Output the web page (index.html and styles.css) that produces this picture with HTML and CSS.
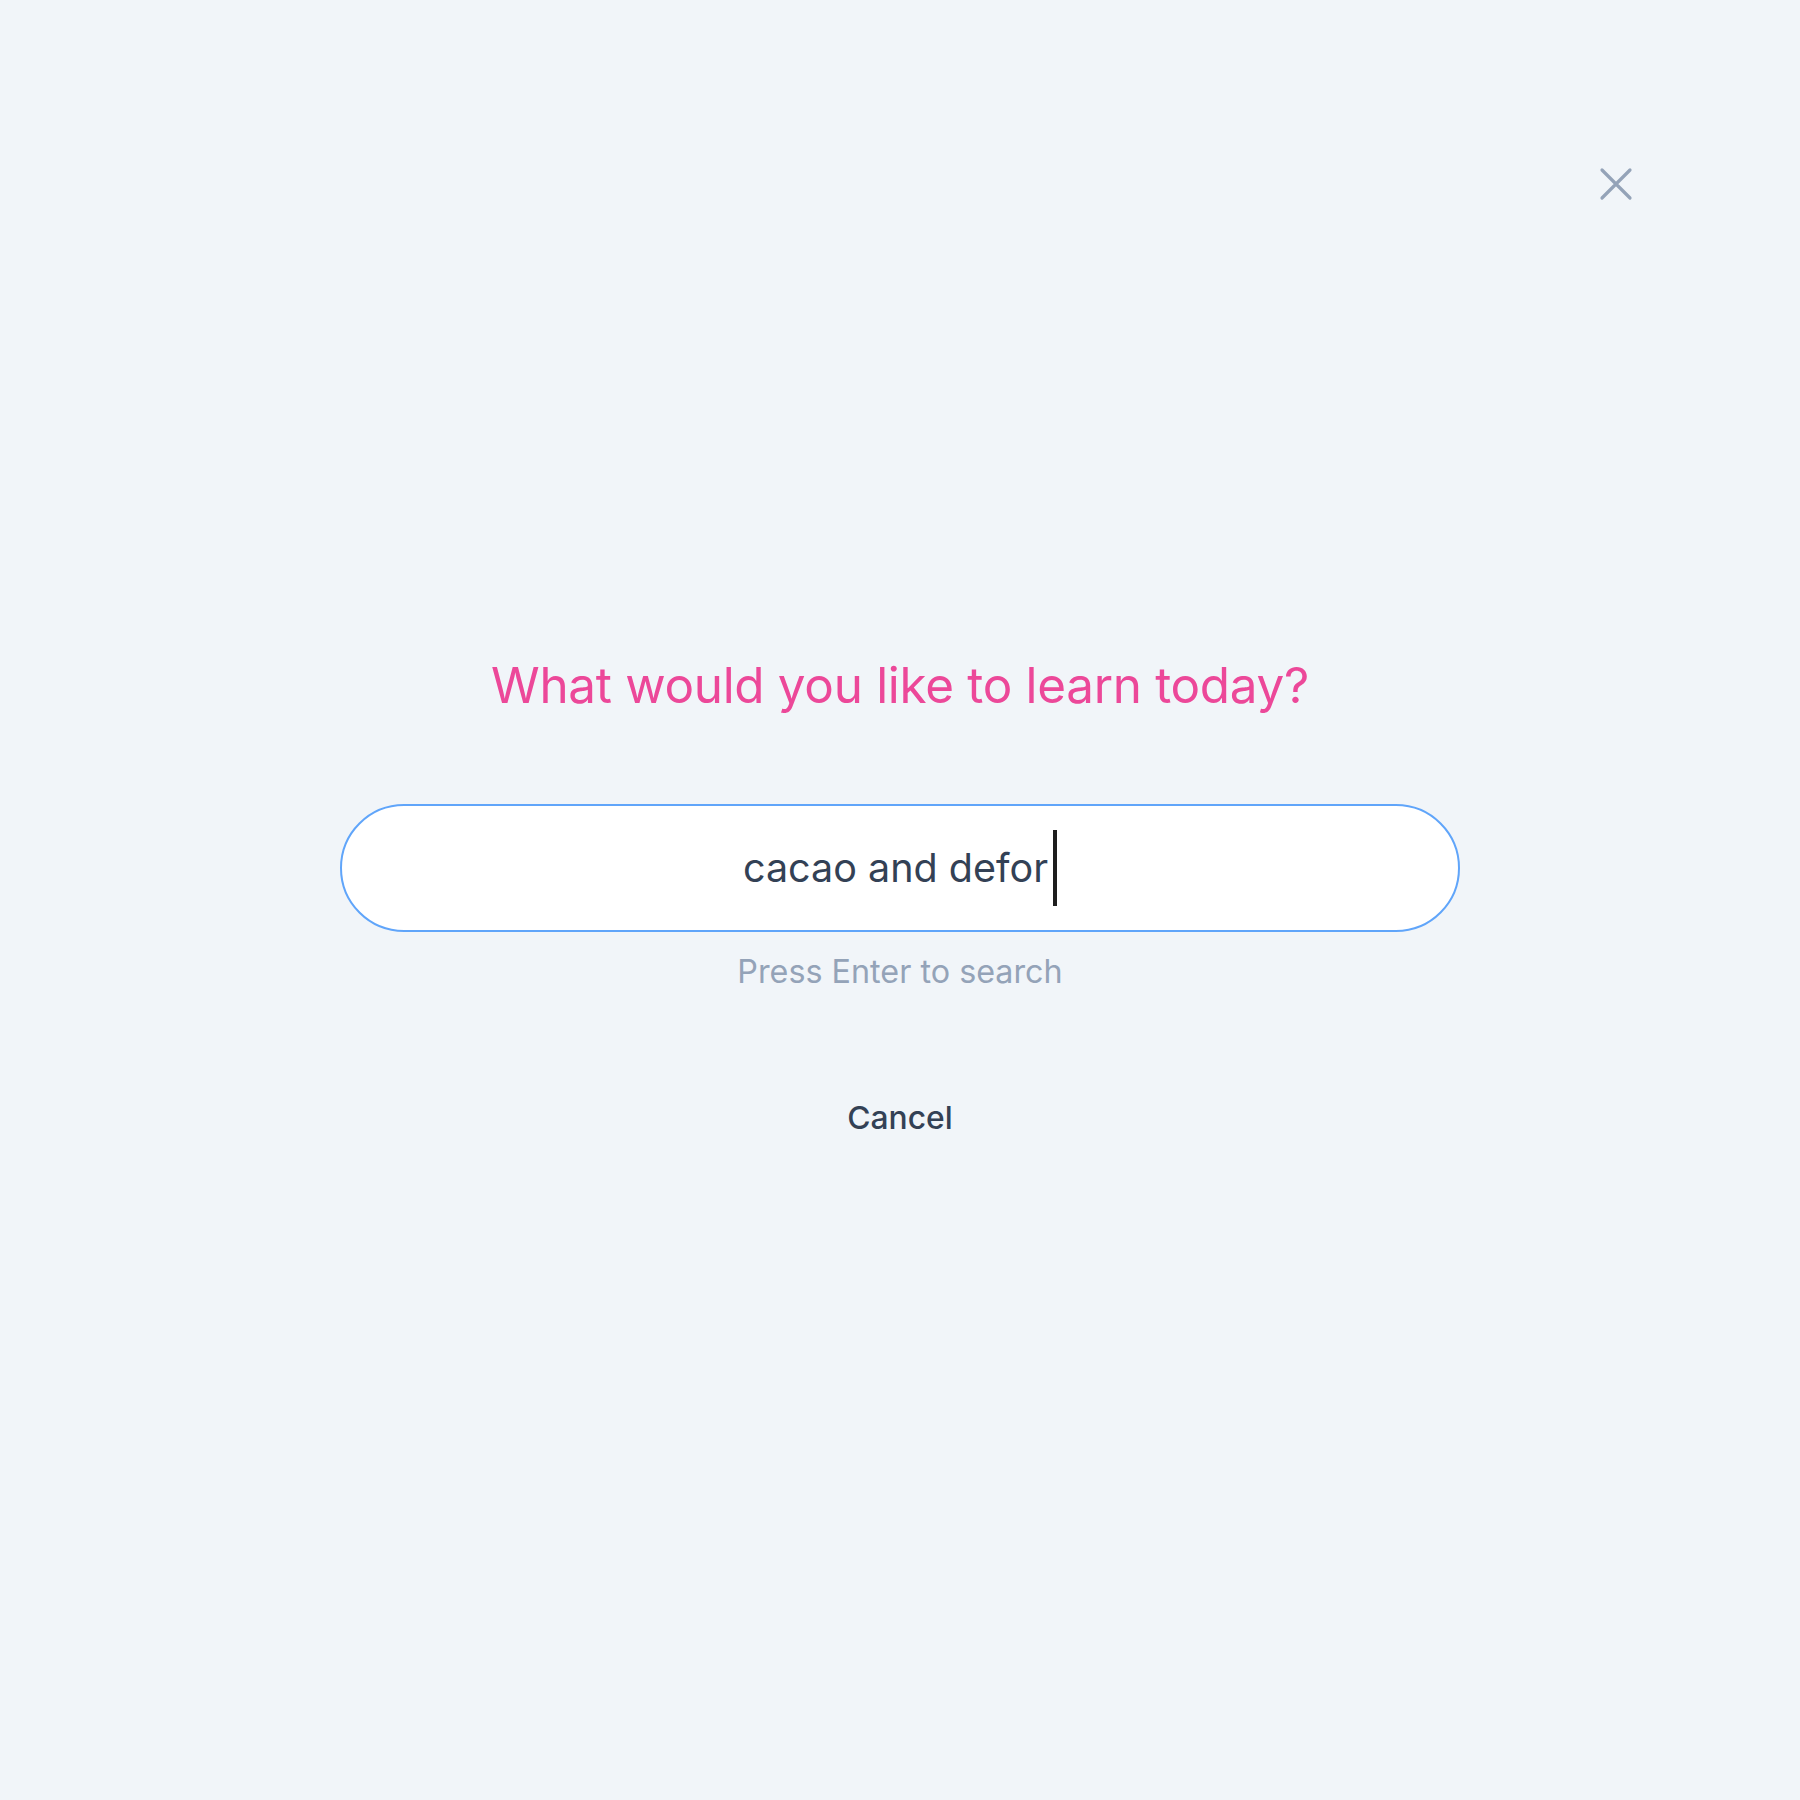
FILE: index.html
```html
<!DOCTYPE html>
<html lang="en">
<head>
<meta charset="utf-8">
<title>Search</title>
<link rel="stylesheet" href="styles.css">
</head>
<body>
<div class="page">
  <button class="close" aria-label="Close">
    <svg width="40" height="40" viewBox="0 0 40 40"><path d="M6 6L34 34M34 6L6 34" fill="none" stroke="#94a3b8" stroke-width="3.2" stroke-linecap="round"/></svg>
  </button>
  <main class="content">
    <h1 class="title">What would you like to learn today?</h1>
    <div class="search">
      <span class="query">cacao and defor</span><span class="caret"></span>
    </div>
    <p class="hint">Press Enter to search</p>
    <button class="cancel">Cancel</button>
  </main>
</div>
</body>
</html>
```
FILE: styles.css
```css
html, body {
  margin: 0;
  padding: 0;
}
body {
  background: #f1f5f9;
  font-family: Inter, "Noto Sans", sans-serif;
}
.page {
  position: relative;
  height: 1800px;
  display: flex;
  flex-direction: column;
}
.close {
  position: absolute;
  top: 164px;
  left: 1596px;
  width: 40px;
  height: 40px;
  padding: 0;
  border: none;
  background: transparent;
  display: flex;
}
.content {
  display: flex;
  flex-direction: column;
  align-items: center;
  padding-top: 655px;
}
.title {
  margin: 0;
  font-size: 49.4px;
  line-height: 60px;
  font-weight: 400;
  color: #ec4899;
  letter-spacing: -0.3px;
}
.search {
  margin-top: 89px;
  box-sizing: border-box;
  width: 1120px;
  height: 128px;
  background: #fff;
  border: 2px solid #60a5fa;
  border-radius: 64px;
  display: flex;
  align-items: center;
  justify-content: center;
}
.query {
  font-size: 39.5px;
  line-height: 50px;
  color: #334155;
}
.caret {
  width: 4px;
  height: 76px;
  background: #1e1e1e;
  margin-left: 5px;
}
.hint {
  margin: 20px 0 0;
  font-size: 32.3px;
  line-height: 40px;
  color: #94a3b8;
}
.cancel {
  margin-top: 106px;
  border: none;
  background: transparent;
  padding: 0;
  font-family: Inter, "Noto Sans", sans-serif;
  font-size: 31.8px;
  line-height: 40px;
  font-weight: 500;
  color: #334155;
}
```
